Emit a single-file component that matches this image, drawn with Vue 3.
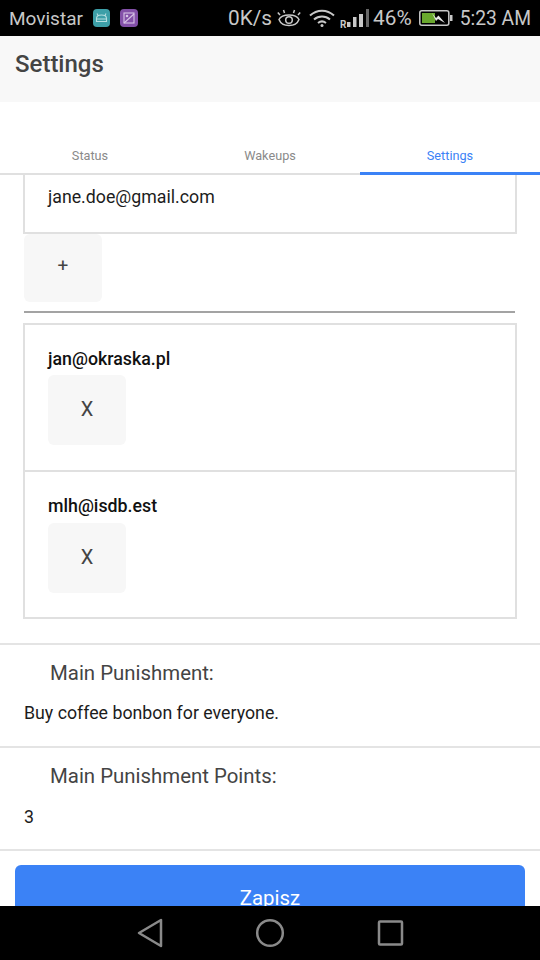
<script setup>
import { ref } from 'vue';

const tabs = ref(['Status', 'Wakeups', 'Settings']);
const activeTab = ref('Settings');
const emails = ref(['jan@okraska.pl', 'mlh@isdb.est']);
</script>

<template>
  <div class="screen">
    <div class="status-bar">
      <div class="status-left">
        <span class="carrier">Movistar</span>
        <svg class="notif" width="17" height="18" viewBox="0 0 17 18">
          <rect width="17" height="18" rx="4" fill="#3d9fa8" />
          <path d="M3.500 12.500V9.500C3.500 7 5.500 6 8.500 6s5 1 5 3.500v3zM5 6.500L4 4.500M12 6.500l1-2" fill="none" stroke="#b5dde0" stroke-width="1.100" />
          <path d="M3.500 10h10" stroke="#b5dde0" stroke-width="1" />
        </svg>
        <svg class="notif" width="18" height="18" viewBox="0 0 18 18">
          <rect width="18" height="18" rx="4" fill="#8350a8" />
          <rect x="4" y="4" width="10" height="10" fill="none" stroke="#d8c4e6" stroke-width="1.100" />
          <path d="M4 14L14 5" stroke="#d8c4e6" stroke-width="1.100" />
          <circle cx="7" cy="7" r="1.300" fill="#d8c4e6" />
        </svg>
      </div>
      <div class="status-right">
        <span class="speed">0K/s</span>
        <svg class="eye" width="24" height="18" viewBox="0 0 24 18" fill="none" stroke="#c8c8c8" stroke-width="1.500">
          <path d="M2 10.500C5 4.500 19 4.500 22 10.500 19 18.500 5 18.500 2 10.500z" />
          <circle cx="12" cy="11" r="3.300" />
          <path d="M3 6L.8 3.500M7.500 4L6.500 1M16.500 4l1-3M21 6l2.200-2.500" />
        </svg>
        <svg class="wifi" width="26" height="18" viewBox="0 0 26 18" fill="none" stroke="#c8c8c8" stroke-width="2">
          <path d="M1 6.500c7-6.500 17-6.500 24 0M5 10.500c4.500-4 11.500-4 16 0M9 14c2.500-2 5.500-2 8 0" />
          <circle cx="13" cy="16.500" r="1.500" fill="#c8c8c8" stroke="none" />
        </svg>
        <svg class="signal" width="29" height="24" viewBox="0 0 29 24">
          <text x="0" y="22" class="roam">R</text>
          <rect x="7" y="16" width="3.500" height="5" fill="#c8c8c8" />
          <rect x="13" y="11" width="3.500" height="10" fill="#c8c8c8" />
          <rect x="19" y="8" width="4" height="13" fill="#c8c8c8" />
          <rect x="26" y="3" width="3" height="18" fill="#666" />
        </svg>
        <span class="percent">46%</span>
        <svg class="battery" width="34" height="16" viewBox="0 0 34 16">
          <rect x=".8" y=".8" width="29" height="14.400" rx="2" fill="none" stroke="#c8c8c8" stroke-width="1.500" />
          <rect x="31" y="5" width="2.500" height="6" fill="#c8c8c8" />
          <rect x="3" y="3" width="13" height="10" fill="#6aa82e" />
          <path d="M13 3l4 5 2.500-2.500L26 13l-7-4-2 2z" fill="#e6e6e6" />
        </svg>
        <span class="clock">5:23 AM</span>
      </div>
    </div>

    <header class="app-header">
      <h1 class="app-title">Settings</h1>
    </header>

    <nav class="tab-row">
      <button
        v-for="tab in tabs"
        :key="tab"
        class="tab"
        :class="{ active: tab === activeTab }"
      >{{ tab }}</button>
    </nav>

    <main class="content">
      <div class="mail-input">jane.doe@gmail.com</div>
      <button class="small-btn add-btn">+</button>
      <hr class="divider" />

      <ul class="mail-list">
        <li v-for="mail in emails" :key="mail" class="mail-item">
          <div class="mail-name">{{ mail }}</div>
          <button class="small-btn remove-btn">X</button>
        </li>
      </ul>

      <section class="field first">
        <div class="field-label">Main Punishment:</div>
        <div class="field-value">Buy coffee bonbon for everyone.</div>
      </section>
      <section class="field">
        <div class="field-label">Main Punishment Points:</div>
        <div class="field-value">3</div>
      </section>

      <div class="save-wrap">
        <button class="save-btn">Zapisz</button>
      </div>
    </main>

    <div class="nav-bar">
      <svg width="30" height="30" viewBox="0 0 30 30" fill="none" stroke="#8a8a8a" stroke-width="2.500" stroke-linejoin="round">
        <path d="M26 2v26L4 15z" />
      </svg>
      <svg width="30" height="30" viewBox="0 0 30 30" fill="none" stroke="#8a8a8a" stroke-width="2.500">
        <circle cx="15" cy="15" r="12.800" />
      </svg>
      <svg width="30" height="30" viewBox="0 0 30 30" fill="none" stroke="#8a8a8a" stroke-width="2.500" stroke-linejoin="round">
        <rect x="4" y="3.500" width="23" height="23" rx="1" />
      </svg>
    </div>
  </div>
</template>

<style>
body {
  margin: 0;
  background: #fff;
}
</style>

<style scoped>
.screen {
  width: 540px;
  height: 960px;
  display: flex;
  flex-direction: column;
  overflow: hidden;
  font-family: Roboto, "Liberation Sans", sans-serif;
  background: #fff;
}

.status-bar {
  height: 36px;
  flex: none;
  background: #000;
  color: #c8c8c8;
  font-size: 19px;
  display: flex;
  align-items: center;
  justify-content: space-between;
  padding: 0 9px;
  box-sizing: border-box;
}
.status-left,
.status-right {
  display: flex;
  align-items: center;
}
.carrier {
  margin-right: 10px;
}
.notif {
  margin-right: 10px;
}
.speed {
  font-size: 20.800px;
  margin-right: 5px;
}
.wifi {
  margin-left: 8px;
}
.signal {
  margin-left: 5px;
}
.roam {
  font-size: 10px;
  font-weight: 700;
  fill: #c8c8c8;
}
.percent {
  font-size: 20.800px;
  margin-left: 4px;
  margin-right: 7px;
}
.clock {
  font-size: 19.300px;
  margin-left: 7px;
}

.app-header {
  height: 66px;
  flex: none;
  background: #f8f8f8;
  box-sizing: border-box;
  padding: 13px 15px;
}
.app-title {
  margin: 0;
  font-size: 24px;
  line-height: 30px;
  font-weight: 500;
  color: #444;
}

.tab-row {
  flex: none;
  margin-top: 34px;
  height: 39px;
  box-sizing: border-box;
  display: flex;
  border-bottom: 2px solid #e0e0e0;
}
.tab {
  flex: 1;
  border: 0;
  background: none;
  font: inherit;
  font-size: 12.700px;
  color: #8a8a8a;
  padding: 2px 0 0;
  margin-bottom: -2px;
  border-bottom: 3px solid transparent;
}
.tab.active {
  color: #3b82f6;
  border-bottom-color: #3b82f6;
}

.content {
  flex: 1;
  min-height: 0;
  overflow: hidden;
}

.mail-input {
  margin: 0 23px;
  height: 59px;
  box-sizing: border-box;
  border: 2px solid #e0e0e0;
  border-top: 0;
  padding: 11px 23px 0;
  font-size: 17.750px;
  line-height: 22px;
  color: #1c1c1c;
}

.small-btn {
  display: block;
  width: 78px;
  border: 0;
  border-radius: 6px;
  background: #f7f7f7;
  color: #444;
  font-family: inherit;
}
.add-btn {
  margin: 0 0 0 24px;
  height: 68px;
  font-size: 19px;
  padding: 0 0 5px;
}
.remove-btn {
  height: 70px;
  font-size: 20px;
  padding: 0 0 3px;
}

.divider {
  margin: 9px 25px 0 24px;
  border: 0;
  border-top: 2px solid #a3a3a3;
  height: 0;
}

.mail-list {
  list-style: none;
  margin: 10px 23px 0;
  padding: 0;
  border: 2px solid #e0e0e0;
}
.mail-item {
  height: 147px;
  box-sizing: border-box;
  padding: 23px 23px 0;
  border-top: 2px solid #e0e0e0;
}
.mail-item:first-child {
  height: 145px;
  border-top: 0;
}
.mail-name {
  font-size: 17.800px;
  line-height: 22px;
  font-weight: 500;
  color: #111;
  margin-bottom: 6px;
}
.mail-item:first-child .mail-name {
  margin-bottom: 5px;
}

.field {
  height: 103px;
  box-sizing: border-box;
  border-top: 2px solid #e4e4e4;
  padding: 15px 24px 0;
}
.field.first {
  margin-top: 24px;
}
.field-label {
  padding-left: 26px;
  font-size: 20.400px;
  line-height: 26px;
  color: #444;
}
.field-value {
  margin-top: 16px;
  font-size: 17.750px;
  line-height: 22px;
  color: #1c1c1c;
}
.field + .field .field-value {
  margin-top: 17px;
}

.save-wrap {
  border-top: 2px solid #e4e4e4;
  padding: 14px 15px 0;
}
.save-btn {
  display: block;
  width: 100%;
  height: 66px;
  border: 0;
  border-radius: 6px;
  background: #3b82f6;
  color: #fff;
  font-family: inherit;
  font-size: 20.400px;
  padding: 0;
}

.nav-bar {
  height: 54px;
  flex: none;
  background: #000;
  position: relative;
  display: flex;
  align-items: center;
  justify-content: center;
  gap: 90px;
}
</style>
